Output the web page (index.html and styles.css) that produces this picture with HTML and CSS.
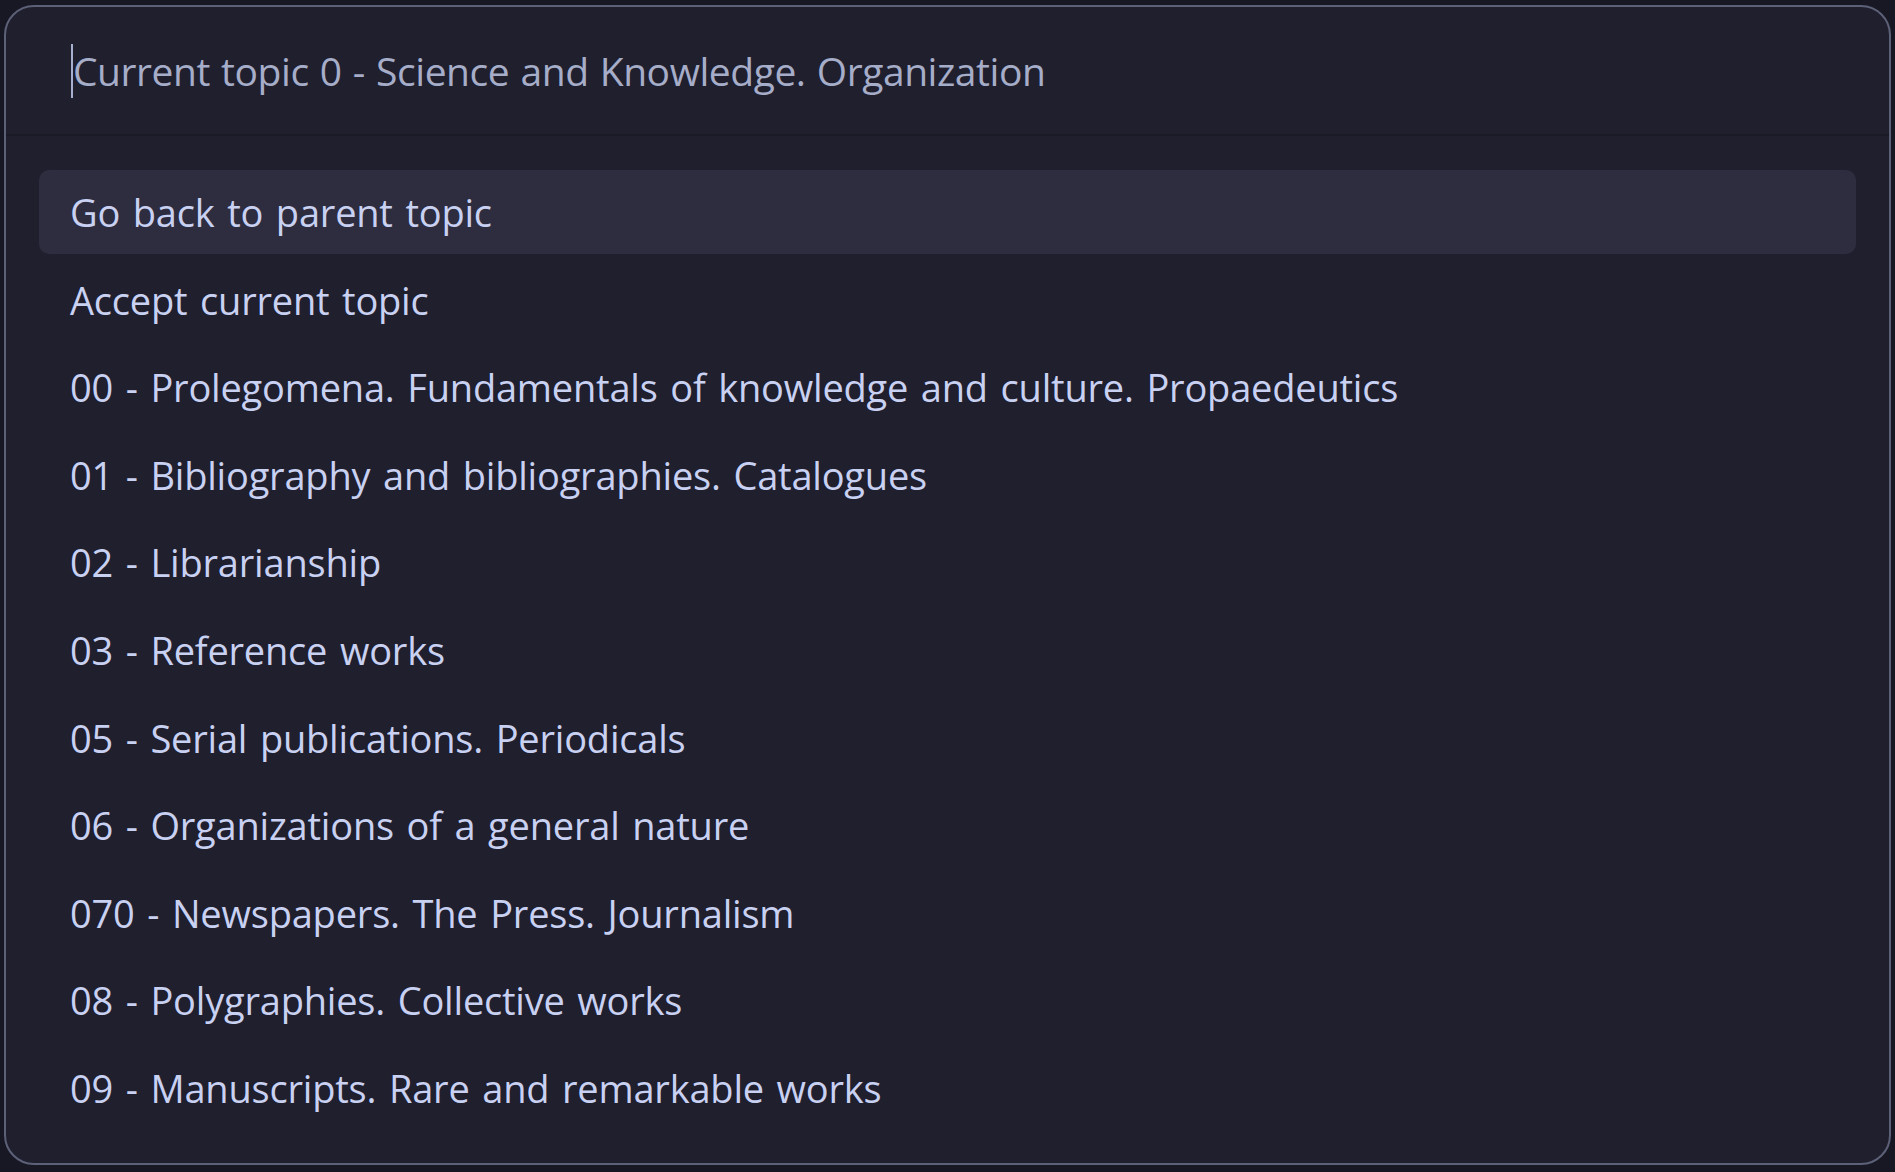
FILE: index.html
```html
<!DOCTYPE html>
<html lang="en">
<head>
<meta charset="utf-8">
<title>Topic picker</title>
<link rel="stylesheet" href="styles.css">
</head>
<body>
<div class="panel">
  <div class="header">
    <span class="caret"></span><span class="prompt">Current topic 0 - Science and Knowledge. Organization</span>
  </div>
  <ul class="list">
    <li class="row selected">Go back to parent topic</li>
    <li class="row">Accept current topic</li>
    <li class="row">00 - Prolegomena. Fundamentals of knowledge and culture. Propaedeutics</li>
    <li class="row">01 - Bibliography and bibliographies. Catalogues</li>
    <li class="row">02 - Librarianship</li>
    <li class="row">03 - Reference works</li>
    <li class="row">05 - Serial publications. Periodicals</li>
    <li class="row">06 - Organizations of a general nature</li>
    <li class="row">070 - Newspapers. The Press. Journalism</li>
    <li class="row">08 - Polygraphies. Collective works</li>
    <li class="row">09 - Manuscripts. Rare and remarkable works</li>
  </ul>
</div>
</body>
</html>
```

FILE: styles.css
```css
html, body {
  margin: 0;
  padding: 0;
  background: #181825;
  height: 100%;
  overflow: hidden;
}

body {
  font-family: "Open Sans", "Noto Sans", sans-serif;
  padding: 5px 4px 0 4px;
  box-sizing: border-box;
}

.panel {
  box-sizing: border-box;
  height: 1160px;
  background: #1f1f2e;
  border: 2px solid #5d6178;
  border-radius: 30px;
  display: flex;
  flex-direction: column;
  overflow: hidden;
}

.header {
  box-sizing: border-box;
  height: 129px;
  border-bottom: 2px solid #1a1a27;
  display: flex;
  align-items: center;
  padding-left: 65px;
}

.caret {
  display: inline-block;
  width: 2px;
  height: 54px;
  background: #a8b0d0;
}

.prompt {
  color: #a6adc8;
  font-size: 39px;
  letter-spacing: -0.45px;
  word-spacing: 1.5px;
  white-space: nowrap;
}

.list {
  list-style: none;
  margin: 0;
  padding: 34px 33px 0 33px;
  display: flex;
  flex-direction: column;
  gap: 3.6px;
}

.row {
  height: 84px;
  border-radius: 10px;
  display: flex;
  align-items: center;
  padding-left: 31px;
  color: #c9d1f2;
  font-size: 38px;
  letter-spacing: -0.2px;
  word-spacing: 3px;
  white-space: nowrap;
}

.row.selected {
  background: #2d2d3f;
}
```
